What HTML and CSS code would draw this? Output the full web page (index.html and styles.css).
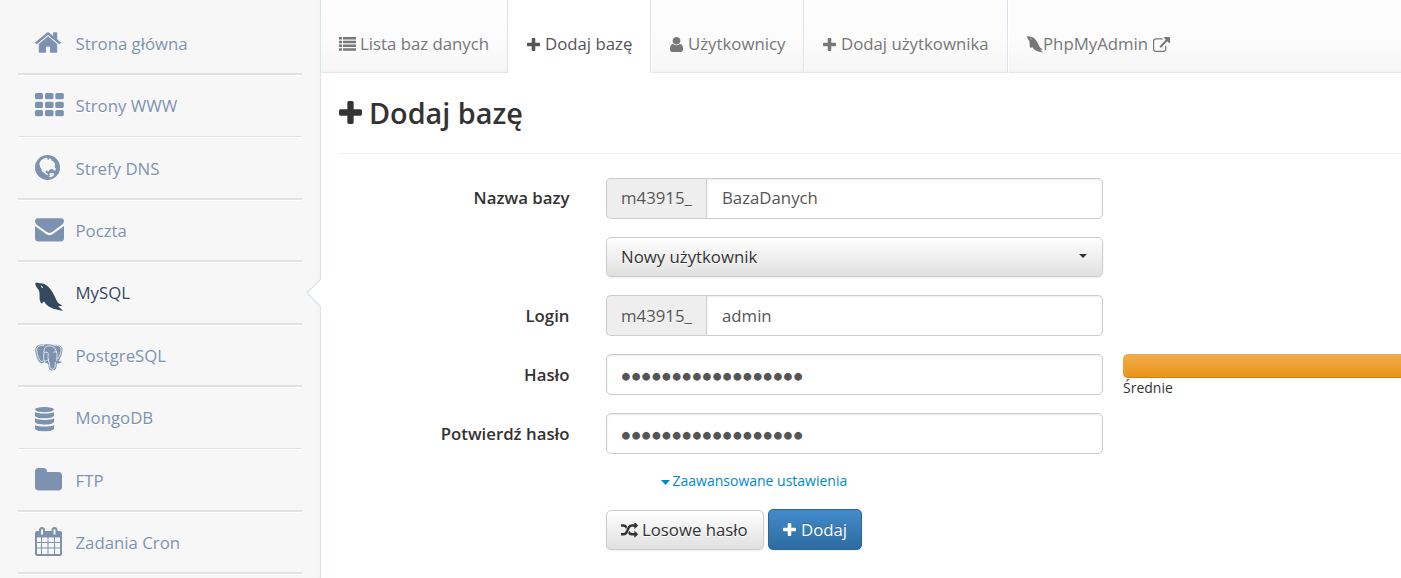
FILE: index.html
```html
<!DOCTYPE html>
<html lang="pl">
<head>
<meta charset="utf-8">
<title>Dodaj bazę</title>
<link rel="stylesheet" href="styles.css">
</head>
<body>
<svg class="defs" width="0" height="0">
  <symbol id="plus" viewBox="192 128 1408 1408"><path d="M1600 736v192q0 40-28 68t-68 28h-416v416q0 40-28 68t-68 28h-192q-40 0-68-28t-28-68v-416h-416q-40 0-68-28t-28-68v-192q0-40 28-68t68-28h416v-416q0-40 28-68t68-28h192q40 0 68 28t28 68v416h416q40 0 68 28t28 68z"/></symbol>
  <symbol id="dolphin" viewBox="0 0 28 30" preserveAspectRatio="none"><path fill-rule="evenodd" d="M.3 1.200C1 .2 2.500.2 3.700 1c1.800.2 4.500.4 6.500 1.400 4.200 2.300 6.800 6.300 9.200 11.300 1.300 2.700 2.200 5 3.400 6.800 1.400 1.500 3.500 2 4.600 3.200l-4.200.5c1.500 1.700 3.500 3 4.800 4.900-4.400-.8-9.200-1.800-12.300-3.500-3-1.600-5-3.400-6.600-6.200-1 .4-1.600 1.500-2.300 2.400-1.800-1.700-2.400-4.400-2.200-6.600-.1-2.600.1-4.800-.8-7C2.100 6 0 3.500.3 1.200zM5.800 3.500c.2 1.500.8 2.400 2.100 2.600.1-1.200-.6-2.400-2.100-2.600z"/></symbol>
</svg>
<div class="app">
  <nav class="sidebar">
    <a class="item"><span class="row"><span class="ico"><svg width="26" height="21" viewBox="85 253 1622 1283"><path d="M1472 992v480q0 26-19 45t-45 19h-384v-384h-256v384h-384q-26 0-45-19t-19-45v-480q0-1 .5-3t.5-3l575-474 575 474q1 2 1 6zm223-69l-62 74q-8 9-21 11h-3q-13 0-21-7l-692-577-692 577q-12 8-24 7-13-2-21-11l-62-74q-8-10-7-23.500t11-21.500l719-599q32-26 76-26t76 26l244 204v-195q0-14 9-23t23-9h192q14 0 23 9t9 23v408l219 182q10 8 11 21.500t-7 23.500z"/></svg></span><span>Strona główna</span></span><span class="rule"></span></a>
    <a class="item"><span class="row"><span class="ico up"><svg width="29" height="24" viewBox="0 0 29 24"><g id="r"><rect width="8" height="6.200" rx="1.500"/><rect x="10" width="8.500" height="6.200" rx="1.500"/><rect x="20.300" width="8.500" height="6.200" rx="1.500"/></g><use href="#r" y="8.700"/><use href="#r" y="17"/></svg></span><span>Strony WWW</span></span><span class="rule"></span></a>
    <a class="item"><span class="row"><span class="ico up"><svg width="25" height="25" viewBox="0 0 25 25"><circle cx="12.500" cy="12.500" r="12.500"/><path class="land" d="M4.300 8.500L6 5.300 9 3.500l2.200-.9 1.600.6-.9 1 1.700.5.9-1.500 1.800.8.200 1.500 1.600.7 1.900 2-.3 3.500 1.200 2-.8 2.200-2.500-1.700-1.600-.5-1 1-1.200 1-2.200-.4-1.200 1.200.6 1.500 1.300-.3-.2 1.300 1.300.9-.8.300-2-1-1.700-1.500-1.700-1.200-1.100-2.700-.9-1.800zM14.500 18.500l2.800-.7 2 .9-1 2.200-2.500 1.300-1.800-.1.900-1.500zM12 15l2.200.5-.5.9-1.800-.4z"/></svg></span><span>Strefy DNS</span></span><span class="rule"></span></a>
    <a class="item"><span class="row"><span class="ico up"><svg width="29" height="24" viewBox="0 0 29 24"><path d="M0 3.200C0 1.400 1.300.2 3 .2h23c1.700 0 3 1.300 3 2.800 0 1.900-1.300 3.400-3 4.600l-8.500 6.200c-2 1.500-4 1.500-6 0L3 7.700C1.200 6.400 0 5 0 3.200z"/><path d="M0 8c3.300 2.700 7 5 10.300 7.500 3 2.200 5.400 2.200 8.400 0L29 8v12.500c0 1.700-1.300 2.900-3 2.900H3c-1.700 0-3-1.200-3-2.900z"/></svg></span><span>Poczta</span></span><span class="rule"></span></a>
    <a class="item active"><span class="row"><span class="ico down"><svg width="28" height="30"><use href="#dolphin"/></svg></span><span>MySQL</span></span><span class="rule"></span><svg class="notch" width="15" height="28" viewBox="0 0 15 28"><path d="M15 .5L1 14l14 13.500z"/><path class="edge" d="M14 1L1 14l13 13"/></svg></a>
    <a class="item"><span class="row"><span class="ico down1"><svg width="28" height="27" viewBox="0 0 28 27"><path d="M9 .7C5 0 .5 1 .3 6c0 4 2 9.500 4 12 1.500 1.800 3.500 1.500 4.700 0 1.500 1.500 3.400 1.500 4.300 1.500.4 3 0 6.900 3.700 6.900 4 0 4.700-2.400 4.800-6.900 2.300.1 4.500-.7 5.200-2.100-1.300.2-2.800.1-3.200-.4C26 13 28 8 27.500 4.500 26.500 1 22 0 18.500 1 15 .1 12 .1 9 .7z"/><path class="cut" d="M9.500 18c-1.200-3.500-1-6-.5-9C8.800 5 9.500 2.500 13 2c3-.7 5.500.3 7 2.500 2 3.500 2.500 6.500 2 9-.8 1.500-.8 2.500.3 3.500M9.500 8.500c2-.6 3.500-.3 3.700 1.200.2 2-.7 3.500.3 5.500M13.500 18.500v-3.300c-1.200 1.400-2.700 2-4 2M18.800 1.500c3-.8 6.200.2 7.300 2.800.3 3.600-1.300 8-3.800 11M9 1.700C5 1 2 2.300 1.700 6c.2 4 1.800 8.500 3.500 10.800 1 1 2.100.9 3.200-.4M18 8.500c1-.7 2-.8 3.500-.4M14.500 18c.3 3.500 0 7.200 2.700 7.200 2.900 0 3-2.700 3.200-7.200"/></svg></span><span>PostgreSQL</span></span><span class="rule"></span></a>
    <a class="item"><span class="row"><span class="ico down1"><svg width="19" height="25" viewBox="0 0 19 25"><ellipse cx="9.500" cy="2.600" rx="9.500" ry="2.600"/><path id="d" d="M0 5c3 2.100 16 2.100 19 0v3.800c0 3.400-19 3.400-19 0z"/><use href="#d" y="6.300"/><use href="#d" y="12.900"/></svg></span><span>MongoDB</span></span><span class="rule"></span></a>
    <a class="item"><span class="row"><span class="ico up"><svg width="27" height="23" viewBox="0 0 27 23"><path d="M0 3.300C0 1.500 1.500 0 3.300 0h5.400C10.500 0 12 1.500 12 3.300v.7h11.700C25.500 4 27 5.500 27 7.300v12c0 1.800-1.500 3.300-3.300 3.300H3.300C1.500 22.600 0 21.100 0 19.300z"/></svg></span><span>FTP</span></span><span class="rule"></span></a>
    <a class="item"><span class="row"><span class="ico up"><svg width="27" height="29" viewBox="0 0 27 29"><path fill-rule="evenodd" d="M2 4h2V3c0-1.700 1.300-3 3-3s3 1.300 3 3v1h6.500V3c0-1.700 1.300-3 3-3s3 1.300 3 3v1H25c1.100 0 2 .9 2 2v21c0 1.100-.9 2-2 2H2c-1.100 0-2-.9-2-2V6c0-1.100.9-2 2-2zM6 2.500v5h2v-5zm12.500 0v5h2v-5zM2 10.500V15h4v-4.500zm5 0V15h5.500v-4.500zm6.500 0V15H19v-4.500zm6.500 0V15h5v-4.500zM2 16v4.500h4V16zm5 0v4.500h5.500V16zm6.500 0v4.500H19V16zm6.500 0v4.500h5V16zM2 21.500V27h4v-5.500zm5 0V27h5.500v-5.500zm6.500 0V27H19v-5.500zm6.500 0V27h5v-5.500z"/></svg></span><span>Zadania Cron</span></span><span class="rule"></span></a>
  </nav>
  <main class="main">
    <div class="tabs">
      <a class="tab t1"><svg width="17" height="14" viewBox="0 0 17 14"><path d="M0 0h3v2.500H0zm4 0h13v2.500H4zM0 3.800h3v2.500H0zm4 0h13v2.500H4zM0 7.500h3V10H0zm4 0h13V10H4zM0 11.300h3v2.500H0zm4 0h13v2.500H4z"/></svg><span>Lista baz danych</span></a>
      <a class="tab t2 on"><svg width="13" height="13"><use href="#plus"/></svg><span>Dodaj bazę</span></a>
      <a class="tab t3"><svg width="13" height="15" viewBox="256 128 1280 1536" preserveAspectRatio="none"><path d="M1536 1399q0 109-62.500 187t-150.500 78h-854q-88 0-150.500-78t-62.500-187q0-85 8.500-160.500t31.500-152 58.500-131 94-89 134.500-34.500q131 128 313 128t313-128q76 0 134.500 34.500t94 89 58.500 131 31.500 152 8.500 160.500zm-256-887q0 159-112.500 271.500t-271.500 112.500-271.500-112.500-112.500-271.500 112.500-271.500 271.500-112.500 271.500 112.500 112.500 271.500z"/></svg><span>Użytkownicy</span></a>
      <a class="tab t4"><svg width="13" height="13"><use href="#plus"/></svg><span>Dodaj użytkownika</span></a>
      <a class="tab t5"><svg width="16" height="17"><use href="#dolphin"/></svg><span>PhpMyAdmin</span><svg width="17" height="15" viewBox="0 0 1792 1536" preserveAspectRatio="none"><path d="M1408 928v320q0 119-84.500 203.500t-203.500 84.500h-832q-119 0-203.500-84.500t-84.500-203.500v-832q0-119 84.500-203.500t203.500-84.500h704q14 0 23 9t9 23v64q0 14-9 23t-23 9h-704q-66 0-113 47t-47 113v832q0 66 47 113t113 47h832q66 0 113-47t47-113v-320q0-14 9-23t23-9h64q14 0 23 9t9 23zm384-864v512q0 26-19 45t-45 19-45-19l-176-176-652 652q-10 10-23 10t-23-10l-114-114q-10-10-10-23t10-23l652-652-176-176q-19-19-19-45t19-45 45-19h512q26 0 45 19t19 45z"/></svg></a>
    </div>
    <h1 class="title"><svg width="23" height="23"><use href="#plus"/></svg><span>Dodaj bazę</span></h1>
    <form class="form">
      <label class="first">Nazwa bazy</label>
      <div class="group first"><span class="addon">m43915_</span><input type="text" value="BazaDanych"></div>
      <div class="select"><span>Nowy użytkownik</span><svg width="8" height="4" viewBox="0 0 8 4"><path d="M0 0h8L4 4z"/></svg></div>
      <label>Login</label>
      <div class="group"><span class="addon">m43915_</span><input type="text" value="admin"></div>
      <label>Hasło</label>
      <div class="group"><input class="pass" type="text" value="●●●●●●●●●●●●●●●●●●"></div>
      <div class="meter"><div class="bar"></div><span>Średnie</span></div>
      <label>Potwierdź hasło</label>
      <div class="group"><input class="pass" type="text" value="●●●●●●●●●●●●●●●●●●"></div>
      <a class="more"><svg width="9" height="5" viewBox="0 0 9 5"><path d="M0 0h9L4.500 5z"/></svg><span>Zaawansowane ustawienia</span></a>
      <div class="actions">
        <button type="button" class="btn"><svg width="17" height="15" viewBox="0 128 1792 1536" preserveAspectRatio="none"><path d="M666 481q-60 92-137 273-22-45-37-72.500t-40.500-63.500-51-56.500-63-35-81.500-14.500h-224q-14 0-23-9t-9-23v-192q0-14 9-23t23-9h224q250 0 410 225zm1126 799q0 14-9 23l-320 320q-9 9-23 9-13 0-22.500-9.500t-9.500-22.500v-192q-32 0-85 .5t-81 1-73-1-71-5-64-10.500-63-18.500-58-28.500-59-40-55-53.500-56-69.500q59-93 136-273 22 45 37 72.500t40.500 63.500 51 56.500 63 35 81.500 14.500h256v-192q0-14 9-23t23-9q12 0 24 10l319 319q9 9 9 23zm0-896q0 14-9 23l-320 320q-9 9-23 9-13 0-22.500-9.500t-9.500-22.500v-192h-256q-48 0-87 15t-69 45-51 61.500-45 77.500q-32 62-78 171-29 66-49.500 111t-54 105-64 100-74 83-90 68.500-106.500 42-128 16.500h-224q-14 0-23-9t-9-23v-192q0-14 9-23t23-9h224q48 0 87-15t69-45 51-61.500 45-77.500q32-62 78-171 29-66 49.500-111t54-105 64-100 74-83 90-68.500 106.500-42 128-16.500h256v-192q0-14 9-23t23-9q12 0 24 10l319 319q9 9 9 23z"/></svg><span>Losowe hasło</span></button>
        <button type="button" class="btn primary"><svg width="13" height="13"><use href="#plus"/></svg><span>Dodaj</span></button>
      </div>
    </form>
  </main>
</div>
</body>
</html>
```
FILE: styles.css
```css
* { box-sizing: border-box; }
html, body { margin: 0; height: 578px; overflow: hidden; }
body { font: 16.800px/24px "Open Sans", sans-serif; color: #333; background: #fff; }
svg { display: block; flex: none; fill: currentColor; }
.defs { position: absolute; }
.app { display: flex; height: 578px; }

.sidebar { width: 321px; flex: none; padding-top: 12.675px; background: #f7f7f7; border-right: 1px solid #dbe3ea; box-shadow: inset -5px 0 4px -4px #eef0f2; }
.item { position: relative; display: flex; flex-direction: column; height: 62.375px; margin: 0 18px; color: #7c92b0; text-shadow: 0 1px 0 #fff; }
.row { display: flex; align-items: center; flex: 1; padding: 2px 0 0 17px; }
.ico { width: 40.500px; flex: none; margin-top: -2px; }
.ico.up { margin-top: -3px; }
.ico.down { margin-top: 7.500px; }
.ico.down1 { margin-top: 3px; }
.ico svg { filter: drop-shadow(0 1px 0 #fff); }
.rule { height: 1.750px; background: #e2e2e2; box-shadow: 0 1px 0 #fff; }
.active { color: #34495e; }
.notch { position: absolute; right: -19px; top: 17px; fill: #fff; }
.edge { fill: none; stroke: #dbe3ea; stroke-width: 1.300; }
.land { fill: #f7f7f7; }
.cut { fill: none; stroke: #f7f7f7; stroke-width: .8; }

.main { flex: 1; min-width: 0; }
.tabs { display: flex; height: 73px; background: linear-gradient(#fdfdfd, #fcfcfc 50%, #f7f7f7 95%, #f3f3f3); border-bottom: 1px solid #e5e5e5; color: #777; }
.tab { display: flex; align-items: center; gap: 4px; height: 73px; padding: 15px 0 0 18px; border-right: 1px solid #dbe3ea; border-left: 1px solid #fff; white-space: nowrap; }
.t1 { width: 187px; padding-left: 18px; border-left: 0; }
.t2 { width: 143px; gap: 5px; }
.t3 { width: 153px; gap: 5px; }
.t4 { width: 204px; gap: 5px; }
.t5 { border-right: 0; gap: 0; }
.t5 svg:last-child { margin-left: 5px; }
.tab.on { background: #fff; color: #555; }

.title { display: flex; align-items: center; gap: 7px; height: 81px; margin: 0 0 24px 18px; border-bottom: 1px solid #eee; font-size: 28.800px; line-height: 36px; font-weight: 600; }
.title svg { margin-top: -2px; }
.form { display: grid; grid-template-columns: 248.500px 533.500px 1fr; row-gap: 18px; align-items: start; }
.form label { grid-column: 1; text-align: right; font-weight: 600; line-height: 41px; }
.form label.first { line-height: 39px; }
.form .first .addon { line-height: 37px; }
.first input { padding-bottom: 2px; }
.group { grid-column: 2; }
.group, .select, .more, .actions { margin-left: 36.500px; width: 497px; }
.group { display: flex; height: 41px; }
.addon { width: 100px; flex: none; padding-left: 14px; line-height: 39px; color: #555; background: #eee; border: 1px solid #ccc; border-radius: 5px 0 0 5px; border-right: 0; text-shadow: 0 1px 0 #fff; }
input { flex: 1; min-width: 0; font: inherit; color: #555; padding: 0 15px; border: 1px solid #ccc; border-radius: 5px; outline: 0; background: #fff; box-shadow: inset 0 1px 2px rgba(0,0,0,.08); }
.addon + input { border-radius: 0 5px 5px 0; }
input.pass { font-family: "DejaVu Sans Mono", monospace; font-size: 13px; letter-spacing: 2.300px; padding: 2px 0 0 15px; }
.select { grid-column: 2; display: flex; align-items: center; justify-content: space-between; height: 40px; padding: 0 15px 0 14px; }
.select svg { margin-top: -3px; }
.select, .btn { color: #333; border: 1px solid #ccc; border-radius: 5px; background: linear-gradient(#fff, #e0e0e0); box-shadow: 0 1px 2px rgba(0,0,0,.075); text-shadow: 0 1px 0 #fff; }
.meter { grid-column: 3; padding-left: 20px; height: 41px; font-size: 14px; line-height: 20px; }
.bar { height: 24px; border-radius: 5px 0 0 5px; background: linear-gradient(#f0ad4e, #eb9316); box-shadow: inset 0 -1px 0 rgba(0,0,0,.12); }
.more { grid-column: 2; display: flex; align-items: center; gap: 3px; height: 20px; margin-top: -1px; padding-left: 54.500px; color: #0088cc; font-size: 14px; line-height: 20px; }
.more svg { margin-top: 2px; }
.actions { grid-column: 2; display: flex; gap: 4px; margin-top: 1px; }
.btn { display: flex; align-items: center; gap: 4px; height: 40px; width: 158px; padding: 0 0 0 14px; font: inherit; white-space: nowrap; }
.primary { gap: 5px; width: 94px; height: 41px; margin-top: -1px; color: #fff; border-color: #2b669a; background: linear-gradient(#428bca, #2d6ca2); text-shadow: 0 -1px 0 rgba(0,0,0,.2); }
```
